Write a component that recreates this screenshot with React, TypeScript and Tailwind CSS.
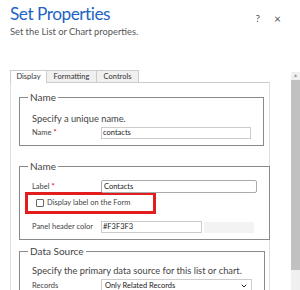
import { ChevronDown } from 'lucide-react'

function Fieldset({ legend, children }: { legend: string; children: React.ReactNode }) {
  return (
    <fieldset className="mx-[8px] border border-[#8a8a8a] px-[12px] pb-[6px]">
      <legend className="ml-[-4px] px-[2px] text-[10px] leading-[12px] text-[#444]">{legend}</legend>
      {children}
    </fieldset>
  )
}

function Row({ label, required, children }: { label: string; required?: boolean; children: React.ReactNode }) {
  return (
    <div className="flex items-center">
      <div className="w-[69px] shrink-0 text-[7.5px] leading-[10px] text-[#444]">
        {label}
        {required && <span className="ml-[2px] text-[#d00]">*</span>}
      </div>
      {children}
    </div>
  )
}

export default function App() {
  return (
    <div className="relative h-[290px] w-[300px] overflow-hidden bg-white font-['Lato',sans-serif]">
      <header className="flex items-start px-[10px] pt-[3px]">
        <div className="flex-1">
          <h1 className="text-[17.3px] leading-[22px] tracking-[-0.5px] text-[#1f63c3]">Set Properties</h1>
          <p className="mt-[1px] text-[9.3px] leading-[12px] text-[#555]">Set the List or Chart properties.</p>
        </div>
        <div className="mr-[9px] mt-[8px] flex items-center gap-[14px] text-[10px] text-[#555]">
          <span>?</span>
          <span className="text-[12px] leading-[14px]">×</span>
        </div>
      </header>

      <div className="mt-[32px] flex">
        <div className="ml-[10px] w-[260px]">
          <div className="flex text-[7.5px] text-[#333]">
            <div className="flex h-[13px] w-[37px] items-center justify-center border border-b-0 border-[#ccc] bg-white">Display</div>
            <div className="flex h-[13px] w-[50px] items-center justify-center border border-l-0 border-[#ccc] bg-[#f0f0f0]">Formatting</div>
            <div className="flex h-[13px] w-[42px] items-center justify-center border border-l-0 border-[#ccc] bg-[#f0f0f0]">Controls</div>
            <div className="flex-1 border-b border-[#ccc]" />
          </div>
          <div className="h-[220px] border-x border-[#ddd] pt-[8px]">
            <Fieldset legend="Name">
              <p className="mt-[9px] text-[9.3px] leading-[14px] text-[#444]">Specify a unique name.</p>
              <div className="mt-[1px]">
                <Row label="Name" required>
                  <div className="flex h-[12px] w-[150px] items-center border border-[#ccc] px-[1px] text-[7.5px] text-[#222]">contacts</div>
                </Row>
              </div>
            </Fieldset>

            <div className="mt-[14px]">
              <Fieldset legend="Name">
                <div className="mt-[8px]">
                  <Row label="Label" required>
                    <div className="flex h-[13px] w-[156px] items-center rounded-[2px] border border-[#aaa] px-[2px] text-[7.5px] text-[#222]">Contacts</div>
                  </Row>
                </div>
                <div className="ml-[-7px] mt-[-1px] flex h-[22px] w-[131px] items-center border-[3px] border-[#e21d1d] pl-[8px]">
                  <span className="h-[8px] w-[8px] rounded-[1px] border border-[#666]" />
                  <span className="ml-[3px] text-[7.5px] text-[#444]">Display label on the Form</span>
                </div>
                <div className="mt-[7px]">
                  <Row label="Panel header color">
                    <div className="flex h-[12px] w-[101px] items-center border border-[#ccc] px-[1px] text-[7.5px] text-[#222]">#F3F3F3</div>
                    <div className="ml-[2px] h-[11px] w-[50px] bg-[#f3f3f3]" />
                  </Row>
                </div>
              </Fieldset>
            </div>

            <div className="mt-[5px]">
              <Fieldset legend="Data Source">
                <p className="mt-[7px] whitespace-nowrap text-[9.3px] leading-[14px] text-[#444]">Specify the primary data source for this list or chart.</p>
                <div className="mt-[1px]">
                  <Row label="Records">
                    <div className="flex h-[13px] w-[151px] items-center justify-between border border-[#ccc] px-[3px] text-[7.5px] text-[#222]">
                      Only Related Records
                      <ChevronDown size={8} strokeWidth={3} />
                    </div>
                  </Row>
                </div>
              </Fieldset>
            </div>
          </div>
        </div>
        <div className="flex-1" />
        <div className="mt-[2px] flex w-[9px] flex-col bg-[#f0f0f0]">
          <div className="flex h-[8px] items-center justify-center text-[5px] text-[#999]">▲</div>
          <div className="h-[190px] bg-[#c1c1c1]" />
        </div>
      </div>
    </div>
  )
}
